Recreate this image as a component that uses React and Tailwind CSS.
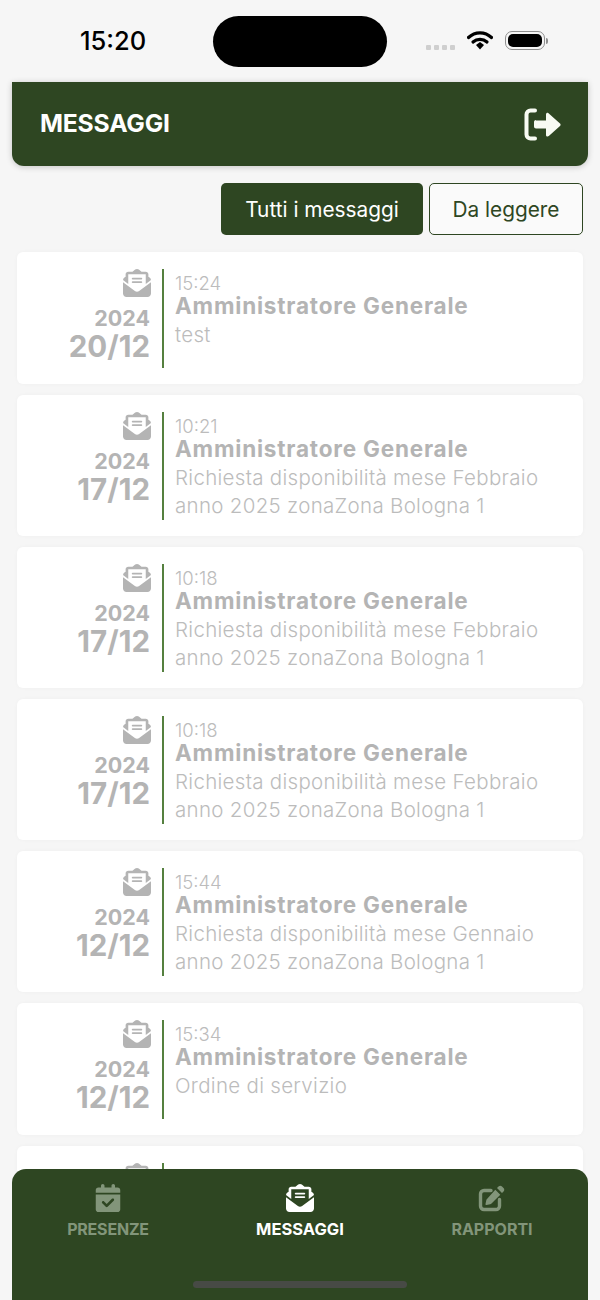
import { FaCalendarCheck, FaEnvelopeOpenText } from "react-icons/fa6";

const MESSAGES = [
  { year: "2024", day: "20/12", time: "15:24", lines: ["test"] },
  { year: "2024", day: "17/12", time: "10:21", lines: ["Richiesta disponibilità mese Febbraio", "anno 2025 zonaZona Bologna 1"] },
  { year: "2024", day: "17/12", time: "10:18", lines: ["Richiesta disponibilità mese Febbraio", "anno 2025 zonaZona Bologna 1"] },
  { year: "2024", day: "17/12", time: "10:18", lines: ["Richiesta disponibilità mese Febbraio", "anno 2025 zonaZona Bologna 1"] },
  { year: "2024", day: "12/12", time: "15:44", lines: ["Richiesta disponibilità mese Gennaio", "anno 2025 zonaZona Bologna 1"] },
  { year: "2024", day: "12/12", time: "15:34", lines: ["Ordine di servizio"] },
  { year: "2024", day: "12/12", time: "15:30", lines: ["Ordine di servizio"] }
];

function StatusBar() {
  return (
    <div className="flex h-[82px] shrink-0 items-start">
      <div className="ml-[80px] mt-[25px] w-[133px] text-[25.500px] leading-[32px] font-medium text-black">15:20</div>
      <div className="mt-[16px] h-[51px] w-[174px] rounded-full bg-black" />
      <div className="ml-[39px] mt-[45px] flex w-[30px] gap-[3px]">
        <span className="h-[5px] w-[5px] rounded-[1px] bg-[#cfcfcf]" />
        <span className="h-[5px] w-[5px] rounded-[1px] bg-[#cfcfcf]" />
        <span className="h-[5px] w-[5px] rounded-[1px] bg-[#cfcfcf]" />
        <span className="h-[5px] w-[5px] rounded-[1px] bg-[#cfcfcf]" />
      </div>
      <svg className="ml-[11px] mt-[30px]" width="26" height="20" viewBox="0 0 26 20">
        <path d="M1.500 7.500C8 1.200 18 1.200 24.500 7.500" fill="none" stroke="#000" strokeWidth="3.200" strokeLinecap="round" />
        <path d="M6 12C10 8.400 16 8.400 20 12" fill="none" stroke="#000" strokeWidth="3.200" strokeLinecap="round" />
        <path d="M9 15l4-3 4 3-4 4.500z" fill="#000" />
      </svg>
      <div className="ml-[12px] mt-[31px] flex items-center">
        <div className="h-[19px] w-[40px] rounded-[7px] border border-[#8f8f8f] p-[2px]">
          <div className="h-full w-full rounded-[5px] bg-black" />
        </div>
        <span className="ml-[1px] h-[6px] w-[2px] rounded-r-sm bg-[#8f8f8f]" />
      </div>
    </div>
  );
}

function Header() {
  return (
    <div className="mx-[12px] flex h-[84px] shrink-0 items-center justify-between rounded-b-[12px] bg-[#2e4622] pl-[28px] pr-[26px] shadow-[0_1px_6px_rgba(0,0,0,0.2)]">
      <span className="text-[24.700px] font-bold tracking-[-0.2px] text-white">MESSAGGI</span>
      <svg width="38" height="33" viewBox="0 0 38 33">
        <path d="M11 2.500H6.500A4 4 0 0 0 2.500 6.500V26.500A4 4 0 0 0 6.500 30.500H11" fill="none" stroke="#f8fbf3" strokeWidth="4" strokeLinecap="round" />
        <path d="M12 12.500h10V6.500c0-1.500 1.700-2.200 2.800-1.100l11.200 10c.8.700.8 1.900 0 2.600l-11.200 10c-1.100 1-2.800.3-2.800-1.100v-6.400H12c-1.100 0-2-.9-2-2v-4.500c0-1.100.9-2 2-2z" fill="#f8fbf3" />
      </svg>
    </div>
  );
}

function Filters() {
  return (
    <div className="mr-[17px] mt-[17px] flex shrink-0 justify-end gap-[6px]">
      <button type="button" className="h-[52px] w-[202px] rounded-[5px] bg-[#2e4622] pt-[2px] text-[20.800px] text-white">
        Tutti i messaggi
      </button>
      <button type="button" className="h-[52px] w-[154px] rounded-[5px] border border-[#2e4622] bg-[#fafafa] pt-[2px] text-[20.800px] text-[#2e4622]">
        Da leggere
      </button>
    </div>
  );
}

function MessageCard({ message }) {
  return (
    <div className="flex shrink-0 rounded-[6px] bg-white pb-[16px] pt-[17px] shadow-[0_0_4px_rgba(0,0,0,0.03)]">
      <div className="flex w-[134px] flex-col items-end text-[#b4b4b4]">
        <FaEnvelopeOpenText className="h-[28px] w-[28px]" />
        <div className="mt-[6px] pr-[1px] text-[21.500px] leading-[30px] font-bold">{message.year}</div>
        <div className="pr-[1px] text-[29.500px] leading-[27px] font-bold">{message.day}</div>
      </div>
      <div className="ml-[11px] w-[2px] bg-[#55803f]" />
      <div className="ml-[11px] min-h-[99px] text-[#bcbcbc]">
        <div className="text-[18.500px] leading-[28px] font-light">{message.time}</div>
        <div className="-mt-[6px] text-[22.500px] leading-[30px] font-bold tracking-[0.8px] text-[#b4b4b4]">Amministratore Generale</div>
        {message.lines.map((line) => (
          <div key={line} className="text-[20.500px] leading-[28px] font-light tracking-[0.3px]">
            {line}
          </div>
        ))}
      </div>
    </div>
  );
}

function ReportIcon() {
  return (
    <svg width="28" height="28" viewBox="0 0 28 28" fill="currentColor">
      <path d="M13 6.500H6A3.500 3.500 0 0 0 2.500 10V22A3.500 3.500 0 0 0 6 25.500H18A3.500 3.500 0 0 0 21.500 22V15.500" fill="none" stroke="currentColor" strokeWidth="3.400" strokeLinecap="round" />
      <path d="M20.500 2.500c1-1 2.500-1 3.500 0l1.500 1.500c1 1 1 2.500 0 3.500l-1.500 1.500-5-5zM17.300 5.700l5 5-8.800 8.800c-.4.400-.8.600-1.300.7l-3.700.8c-.6.100-1.100-.4-1-1l.8-3.700c.1-.5.300-.9.700-1.300z" />
    </svg>
  );
}

function BottomNav() {
  return (
    <div className="absolute bottom-0 left-[12px] right-[12px] h-[131px] rounded-t-[14px] bg-[#2e4622]">
      <div className="grid grid-cols-3 pt-[15px]">
        <div className="flex flex-col items-center text-[#82957a]">
          <FaCalendarCheck className="h-[28px] w-[26px]" />
          <span className="mt-[3px] text-[16px] leading-[28px] font-bold tracking-[-0.2px]">PRESENZE</span>
        </div>
        <div className="flex flex-col items-center text-white">
          <FaEnvelopeOpenText className="h-[28px] w-[28px]" />
          <span className="mt-[3px] text-[16.500px] leading-[28px] font-bold">MESSAGGI</span>
        </div>
        <div className="flex flex-col items-center text-[#82957a]">
          <ReportIcon />
          <span className="mt-[3px] text-[16px] leading-[28px] font-bold">RAPPORTI</span>
        </div>
      </div>
      <div className="absolute bottom-[12px] left-[181px] h-[7px] w-[214px] rounded-full bg-[#474a45]" />
    </div>
  );
}

export default function App() {
  return (
    <div className="relative flex h-[1300px] w-[600px] flex-col overflow-hidden bg-[#f6f6f6] font-['Inter','Liberation_Sans',sans-serif]">
      <StatusBar />
      <Header />
      <Filters />
      <div className="mx-[17px] mt-[17px] flex flex-col gap-[11px]">
        {MESSAGES.map((message, index) => (
          <MessageCard key={index} message={message} />
        ))}
      </div>
      <BottomNav />
    </div>
  );
}
